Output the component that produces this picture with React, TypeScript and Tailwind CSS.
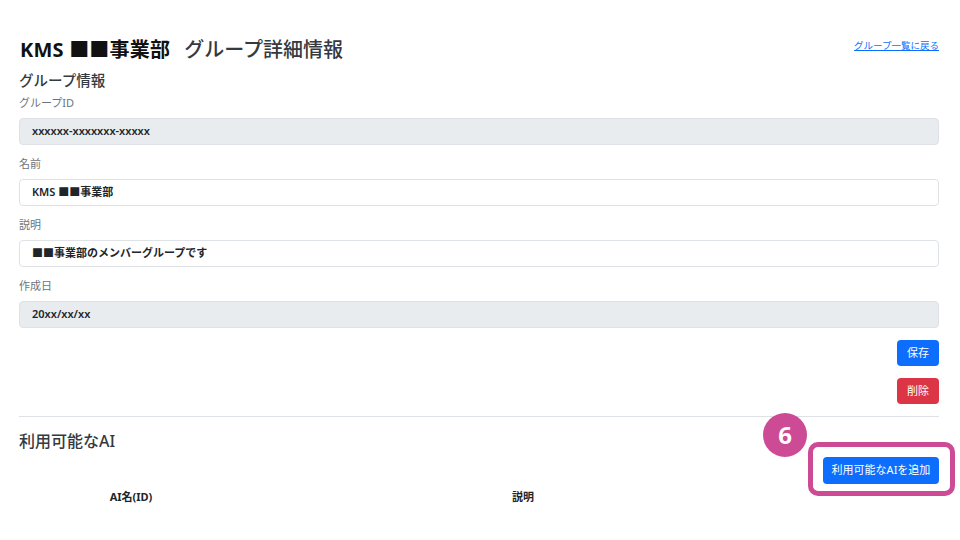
import React from 'react';

const font = { fontFamily: '"Noto Sans", "Noto Sans CJK JP", sans-serif' };

function Field({ label, value, readOnly }: { label: string; value: string; readOnly?: boolean }) {
    return (
        <div className="mt-[11px]">
            <div className="h-[16px] leading-[16px] text-[11px] text-[#6c757d] mb-[7px]">{label}</div>
            <div
                className={
                    'h-[27px] rounded-[4px] border border-[#dee2e6] flex items-center pl-[12px] text-[11px] font-semibold text-[#212529] ' +
                    (readOnly ? 'bg-[#e9ecef]' : 'bg-white')
                }
            >
                {value}
            </div>
        </div>
    );
}

export default function App() {
    return (
        <div className="w-[960px] h-[540px] bg-white overflow-hidden" style={font}>
            <div className="ml-[19px] w-[920px] pt-[35px]">
                <div className="flex items-center justify-between h-[30px]">
                    <div className="flex items-center">
                        <span className="text-[20px] font-bold text-[#111] ml-[1px] tracking-[0.2px]">KMS ■■事業部</span>
                        <span className="text-[20px] font-medium text-[#343a40] ml-[14px]">グループ詳細情報</span>
                    </div>
                    <a href="#" className="text-[9.5px] text-[#0d6efd] underline -mt-[8px]">
                        グループ一覧に戻る
                    </a>
                </div>
                <div className="mt-[4px] h-[22px] leading-[22px] text-[14.5px] font-medium text-[#343a40]">グループ情報</div>
                <div className="-mt-[7px]">
                    <Field label="グループID" value="xxxxxx-xxxxxxx-xxxxx" readOnly />
                    <Field label="名前" value="KMS ■■事業部" />
                    <Field label="説明" value="■■事業部のメンバーグループです" />
                    <Field label="作成日" value="20xx/xx/xx" readOnly />
                </div>
                <div className="flex flex-col items-end gap-[12px] mt-[12px]">
                    <button className="w-[42px] h-[26px] rounded-[4px] bg-[#0d6efd] text-white text-[11px]">保存</button>
                    <button className="w-[42px] h-[26px] rounded-[4px] bg-[#dc3545] text-white text-[11px]">削除</button>
                </div>
                <div className="mt-[12px] border-t border-[#dee2e6]" />
                <div className="mt-[12px] h-[24px] leading-[24px] text-[16px] font-medium text-[#343a40]">利用可能なAI</div>
                <div className="flex justify-end mt-[3px]">
                    <div className="relative">
                        <div className="absolute -left-[15px] -top-[14px] -right-[16px] -bottom-[12px] border-[5px] border-[#cc4b94] rounded-[10px]" />
                        <div className="absolute -left-[60px] -top-[43px] w-[44px] h-[44px] rounded-full bg-[#cc4b94] text-white text-[24px] font-bold flex items-center justify-center">
                            6
                        </div>
                        <button className="relative w-[116px] h-[27px] rounded-[4px] bg-[#0d6efd] text-white text-[11px]">
                            利用可能なAIを追加
                        </button>
                    </div>
                </div>
                <div className="grid grid-cols-[224px_560px_136px] h-[26px] items-center text-[11px] font-bold text-[#212529]">
                    <div className="text-center">AI名(ID)</div>
                    <div className="text-center">説明</div>
                    <div />
                </div>
            </div>
        </div>
    );
}
